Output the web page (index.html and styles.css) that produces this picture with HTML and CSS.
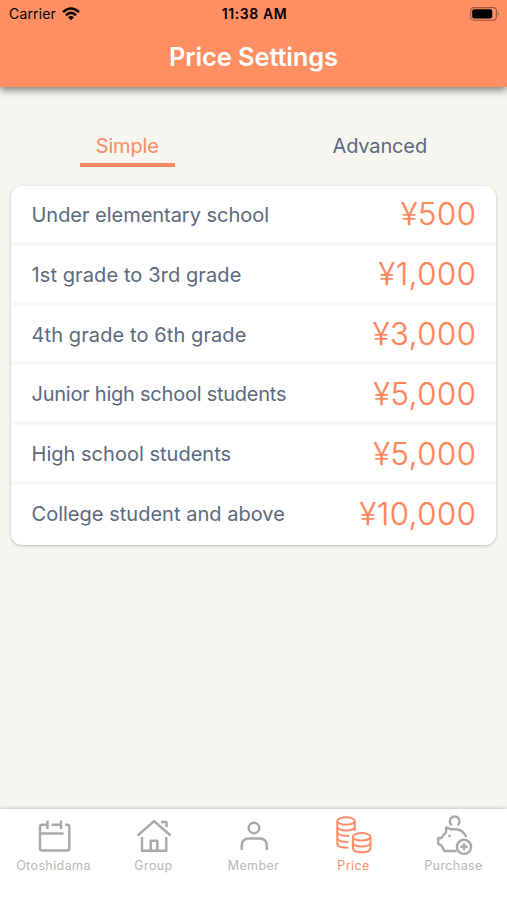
FILE: index.html
```html
<!DOCTYPE html>
<html lang="en">
<head>
<meta charset="utf-8">
<title>Price Settings</title>
<link rel="stylesheet" href="styles.css">
</head>
<body>
<div class="app">
  <header class="header">
    <div class="status">
      <div class="carrier"><span>Carrier</span>
        <svg class="wifi" viewBox="0 0 18 14"><g fill="none" stroke="#000" stroke-width="2.5"><path d="M1 5.2Q9-2.2 17 5.2"/><path d="M3.9 8.2Q9 3.6 14.1 8.2"/></g><path d="M6.1 10.2Q9 7.8 11.9 10.2L9 13.3Z"/></svg>
      </div>
      <time class="clock">11:38 AM</time>
      <svg class="battery" viewBox="0 0 30 14"><rect x=".6" y=".6" width="25.8" height="12.6" rx="3.5" fill="none" stroke="#000" stroke-opacity=".4" stroke-width="1.1"/><rect x="2.2" y="2.2" width="20" height="9.4" rx="2"/><path d="M27.8 4.8q2 2.1 0 4.2z" opacity=".45"/></svg>
    </div>
    <h1 class="title">Price Settings</h1>
  </header>
  <main class="content">
    <nav class="tabs">
      <a class="tab tab-active"><span>Simple</span></a>
      <a class="tab"><span>Advanced</span></a>
    </nav>
    <ul class="card">
      <li class="row"><span class="label label-snug">Under elementary school</span><span class="price">¥500</span></li>
      <li class="row"><span class="label label-wide">1st grade to 3rd grade</span><span class="price">¥1,000</span></li>
      <li class="row"><span class="label label-wide">4th grade to 6th grade</span><span class="price">¥3,000</span></li>
      <li class="row"><span class="label label-tight">Junior high school students</span><span class="price">¥5,000</span></li>
      <li class="row"><span class="label">High school students</span><span class="price">¥5,000</span></li>
      <li class="row"><span class="label">College student and above</span><span class="price">¥10,000</span></li>
    </ul>
  </main>
  <nav class="bar">
    <a class="item"><svg class="icon" viewBox="0 0 44 44"><path d="M15.5 11.7H10Q8 11.7 8 13.7V35.5Q8 37.5 10 37.5H35.3Q37.3 37.5 37.3 35.5V13.7Q37.3 11.7 35.3 11.7H33M15.5 7.5V16M19.5 11.7H29M29 7.5V16M8 20.5H31.5"/></svg><span>Otoshidama</span></a>
    <a class="item"><svg class="icon" viewBox="0 0 44 44"><path d="M5.7 22.5L22 8.2L38.5 22.5M10 24V37.7H34.3V24M18.7 37.7V27.7H25.3V37.7M29 9H34.5V14"/></svg><span>Group</span></a>
    <a class="item"><svg class="icon" viewBox="0 0 44 44"><circle cx="22" cy="15" r="5.3"/><path d="M9.7 37V33Q9.7 25.5 17 25.5H27.5Q34.8 25.5 34.8 33V37"/></svg><span>Member</span></a>
    <a class="item item-active"><svg class="icon" viewBox="0 0 44 44"><ellipse cx="14" cy="8" rx="8.7" ry="3.8"/><path d="M5.3 8V31Q6 34.7 16.5 34.7M22.7 8V18M5.3 13.5Q6 17.5 14 17.5T22.7 13.5M5.3 19Q6 23 17 23M5.3 25Q6 29 16.5 29"/><ellipse cx="29.7" cy="23.8" rx="8.8" ry="3.8"/><path d="M20.9 23.8V35.5Q21.5 39.3 29.7 39.3T38.5 35.5V23.8M20.9 29.6Q21.5 33.5 29.7 33.5T38.5 29.6"/></svg><span>Price</span></a>
    <a class="item"><svg class="icon" viewBox="0 0 44 44"><path d="M19.8 12.3A4.9 4.9 0 1 1 25.6 12.3M34.3 24Q30.5 16.2 23.5 16.2H18.5Q16.5 14.8 14.2 14.5L14 19.5Q11 22 9.5 25H6.2V31L9.5 32.5Q10.5 35 12.5 38H24.5"/><circle cx="32" cy="33.8" r="7.1"/><path d="M32 30.3V37.3M28.5 33.8H35.5M17.5 21.8V24"/></svg><span>Purchase</span></a>
  </nav>
</div>
</body>
</html>
```
FILE: styles.css
```css
* { box-sizing: border-box; }
body { margin: 0; background: #f7f5f0; font-family: Inter, "Liberation Sans", sans-serif; color: #5b697c; }
.app { height: 900px; display: flex; flex-direction: column; overflow: hidden; }
.header { height: 87px; flex: none; background: #ff8e63; box-shadow: 0 3px 8px rgba(0,0,0,.5); }
.status { height: 27px; padding: 0 7px 0 9px; display: grid; grid-template-columns: 1fr auto 1fr; align-items: center; color: #000; font-size: 14px; }
.carrier { display: flex; align-items: center; gap: 6px; letter-spacing: .15px; }
.wifi { width: 18px; height: 14px; }
.clock { font-weight: 600; letter-spacing: .6px; }
.battery { width: 30px; height: 14px; justify-self: end; }
.title { margin: 0; height: 60px; line-height: 60px; text-align: center; color: #fff; font-size: 25.5px; font-weight: 600; letter-spacing: -.15px; }
.content { flex: 1; padding: 39px 11px 0; }
.tabs { display: flex; height: 41px; padding: 0 1px; margin: 0 -11px; }
.tab { flex: 1; text-align: center; font-size: 20px; line-height: 40px; letter-spacing: -.15px; }
.tab span { display: inline-block; }
.tab-active { color: #f88c64; }
.tab-active span { width: 95px; height: 41px; border-bottom: 4px solid #f88c64; }
.card { list-style: none; margin: 19px 0 0; padding: 0; height: 359px; display: grid; grid-template-rows: repeat(6, 1fr); border-radius: 11px; background: #fff; box-shadow: 0 1px 3px rgba(0,0,0,.24); overflow: hidden; }
.row { padding: 2px 20px 0 20.5px; display: flex; align-items: center; justify-content: space-between; border-bottom: 4px solid #f8f8f7; }
.row:last-child { border-bottom: 0; padding-bottom: 4px; }
.label { font-size: 20px; letter-spacing: .02px; }
.label-snug { letter-spacing: -.03px; }
.label-wide { letter-spacing: .1px; }
.label-tight { letter-spacing: -.24px; }
.price { font-size: 31px; line-height: 38px; font-weight: 300; letter-spacing: .6px; margin: -1px -.5px 0 0; color: #ff8459; -webkit-text-stroke: .25px #ff8459; }
.bar { height: 91px; flex: none; padding: 4px 3px 0 4px; display: flex; background: #fff; box-shadow: 0 0 4px rgba(0,0,0,.3); }
.item { flex: 1; display: flex; flex-direction: column; align-items: center; color: #b8b8b8; font-size: 12.5px; line-height: 18px; letter-spacing: .4px; }
.item span { margin-left: -1px; }
.item-active { color: #ff8e68; }
.icon { width: 44px; height: 44px; fill: none; stroke: #a9a9a9; stroke-width: 2.4; stroke-linejoin: round; }
.item-active .icon { stroke: #ff8e68; stroke-width: 2; }
```
